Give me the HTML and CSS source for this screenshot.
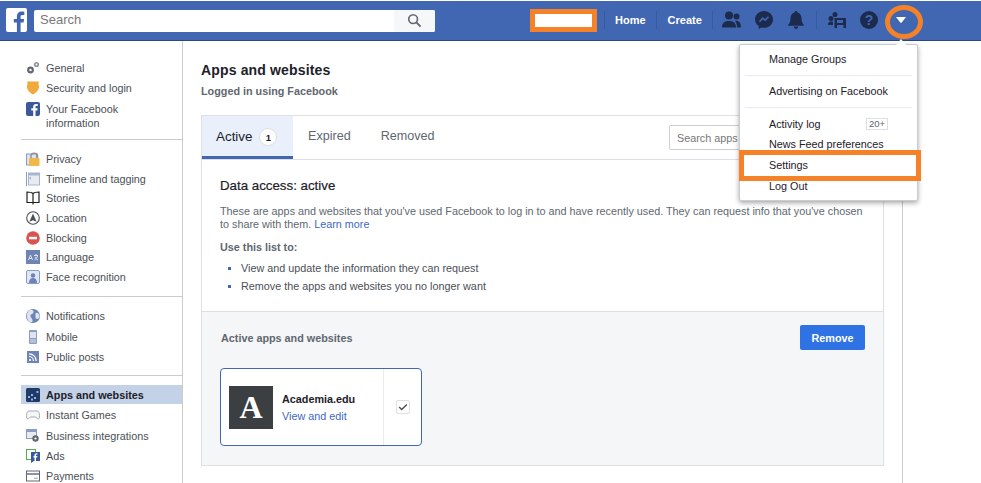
FILE: index.html
```html
<!DOCTYPE html>
<html lang="en">
<head>
  <meta charset="UTF-8" />
  <title>Apps and websites</title>
  <link rel="stylesheet" href="styles.css">
</head>
<body>
  <header class="topbar">
    <div class="logo"><svg viewBox="0 0 21 24" width="21" height="24"><path fill="#4267b2" d="M14.6 24v-9.500h3l.5-3.600h-3.500V8.700c0-1 .3-1.800 1.800-1.800h1.900V3.700c-.4 0-1.500-.2-2.800-.2-2.700 0-4.600 1.700-4.600 4.700v2.700H7.800v3.600h3.100V24z"/></svg></div>
    <div class="search">
      <span class="search-text">Search</span>
      <span class="search-btn"><svg viewBox="0 0 16 16" width="15" height="15"><circle cx="6.5" cy="6.5" r="4.7" fill="none" stroke="#606770" stroke-width="1.7"/><path d="M10 10l4.500 4.500" stroke="#606770" stroke-width="2"/></svg></span>
    </div>
    <div class="redacted"></div>
    <span class="sep"></span>
    <a class="nav-link">Home</a>
    <span class="sep"></span>
    <a class="nav-link">Create</a>
    <span class="sep"></span>
    <div class="nav-icons">
      <svg viewBox="0 0 19 17" width="19" height="17"><circle cx="7" cy="4.500" r="4" fill="#1c2b4d"/><circle cx="14.5" cy="5.500" r="3" fill="#1c2b4d"/><path fill="#1c2b4d" d="M0 16.500c0-4 2-6.500 7-6.500s7 2.500 7 6.500zM15 16.500c0-3-.6-5-2-6.500 3.500-1 6 1.500 6 6.500z"/></svg>
      <svg viewBox="0 0 18 18" width="18" height="18"><path fill="#1c2b4d" d="M9 0c5 0 9 3.700 9 8.400s-4 8.400-9 8.400c-.9 0-1.700-.1-2.500-.3L3.700 18v-3.200C1.400 13.300 0 11 0 8.400 0 3.700 4 0 9 0z"/><path fill="none" stroke="#4267b2" stroke-width="1.6" d="M4.500 10.800l3.200-3.600 2.500 2 3.300-3.500"/></svg>
      <svg viewBox="0 0 18 18" width="18" height="18"><path fill="#1c2b4d" d="M9 0c.9 0 1.500.6 1.500 1.400 2.800.7 4 3 4 6 0 3 .8 5 2.500 6.600v.8H1V14c1.700-1.600 2.500-3.600 2.500-6.600 0-3 1.200-5.300 4-6C7.500.6 8.100 0 9 0zM6.800 15.600h4.400C11 17 10.100 18 9 18s-2-1-2.200-2.400z"/></svg>
      <span class="sep sep-inline"></span>
      <svg viewBox="0 0 18 16" width="18" height="16"><circle cx="3" cy="6.500" r="2.500" fill="#1c2b4d"/><circle cx="7" cy="2.500" r="2.500" fill="#1c2b4d"/><path fill="#1c2b4d" d="M0 13c0-2 1-3.500 3-3.500 1.500 0 2 .5 2 1V13zM6.500 6H18v10h-2.500v-3h-6.500v3H6.500z"/><path fill="#4267b2" d="M9 8h6v3H9z"/></svg>
      <svg viewBox="0 0 18 18" width="18" height="18"><circle cx="9" cy="9" r="9" fill="#1c2b4d"/><text x="9" y="13.800" class="help-mark" text-anchor="middle">?</text></svg>
      <svg class="caret" viewBox="0 0 10 6" width="10" height="6"><path fill="#fff" d="M0 0h10L5.700 5.600a1 1 0 0 1-1.400 0z"/></svg>
    </div>
  </header>

  <div class="page">
    <nav class="sidebar">
      <ul class="side-group">
        <li><svg viewBox="0 0 14 14" width="14" height="14"><circle cx="4.5" cy="9" r="3.400" fill="#606770"/><circle cx="4.5" cy="9" r="1.200" fill="#fff"/><circle cx="10.5" cy="3.500" r="2.600" fill="#8d949e"/><circle cx="10.5" cy="3.500" r=".9" fill="#fff"/></svg>General</li>
        <li><svg viewBox="0 0 14 14" width="14" height="14"><path fill="#f2a93b" d="M1 .5h12c-.8 1.500-.5 3 0 4.500.5 3-2.200 6.700-6 8.500C3.200 11.700.5 8 1 5c.5-1.500.8-3 0-4.500z"/></svg>Security and login</li>
        <li class="two-line"><svg viewBox="0 0 14 14" width="14" height="14"><rect width="14" height="14" rx="2" fill="#3b5998"/><path fill="#fff" d="M9.500 14V8.500h1.800l.3-2.200H9.500V5c0-.6.200-1 1-1h1.200V2.100c-.3 0-1-.1-1.700-.1C8.300 2 7.200 3 7.200 4.800v1.500H5.300v2.200h1.900V14z"/></svg><span>Your Facebook<br>information</span></li>
      </ul>
      <ul class="side-group group-second">
        <li><svg viewBox="0 0 14 14" width="14" height="14"><rect x=".5" y="2" width="10" height="11" fill="#dfe3ee" stroke="#8b9dc3"/><rect x="3" y="6" width="10.500" height="8" rx="1" fill="#f0b849"/><path fill="none" stroke="#90949c" stroke-width="1.5" d="M5 6V3.500C5 .5 11.500 .5 11.500 3.500V6"/></svg>Privacy</li>
        <li><svg viewBox="0 0 14 14" width="14" height="14"><path fill="#8b9dc3" d="M0 0h1v14H0z"/><rect x="2.5" y="1" width="11" height="12" fill="#e9ebee" stroke="#a8b5cf"/><path fill="#a8b5cf" d="M3 1h10v2.500H3zM3 6l2-1.500V8z"/></svg>Timeline and tagging</li>
        <li><svg viewBox="0 0 14 14" width="14" height="14"><path fill="none" stroke="#1c1e21" stroke-width="1.2" d="M7 2.500C5.500 1 3 1 1 1v10.500h6c2.500 0 4 0 6 0V1c-2 0-4.500 0-6 1.500zM7 2.500V13.500"/></svg>Stories</li>
        <li><svg viewBox="0 0 14 14" width="14" height="14"><circle cx="7" cy="7" r="6.300" fill="#fff" stroke="#4b4f56" stroke-width="1.1"/><path fill="#4b4f56" d="M7 2.500l3.600 8.300L7 9.300l-3.600 1.500z"/></svg>Location</li>
        <li><svg viewBox="0 0 14 14" width="14" height="14"><circle cx="7" cy="7" r="6.800" fill="#d9534f"/><rect x="3" y="5.800" width="8" height="2.500" fill="#fff"/></svg>Blocking</li>
        <li><svg viewBox="0 0 14 14" width="14" height="14"><rect width="14" height="14" fill="#6d84b4"/><path fill="none" stroke="#dfe3ee" d="M2.500 10l2-5 2 5M3.200 8.500h2.600M8 5.500h4M10 4v2M8.500 10c1.500-1 2.500-2.500 3-4M9 7c.5 1.300 1.500 2.500 3 3"/></svg>Language</li>
        <li><svg viewBox="0 0 14 14" width="14" height="14"><rect x=".5" y=".5" width="13" height="13" rx="1.500" fill="#dfe6f5" stroke="#8b9dc3"/><circle cx="7" cy="5.500" r="2.200" fill="#6d84b4"/><path fill="#6d84b4" d="M3 13c0-3.500 1.500-5 4-5s4 1.500 4 5z"/></svg>Face recognition</li>
      </ul>
      <ul class="side-group group-third">
        <li><svg viewBox="0 0 14 14" width="14" height="14"><circle cx="7" cy="7" r="7" fill="#6d84b4"/><path fill="#dfe3ee" d="M5 .5c2 .5 3 1.500 2.500 3S5 5 4.500 6.500 6 9 6.500 11 5.500 13.500 4 13 1 10 .8 7 3 1 5 .5zM10 4c1.500-.5 3 .5 3.500 2.500S12.500 10 11 10 9.500 8 9.500 7 9 4.500 10 4z"/></svg>Notifications</li>
        <li><svg viewBox="0 0 14 14" width="14" height="14"><rect x="3" y="0" width="8" height="14" rx="1" fill="#8b9dc3"/><rect x="4" y="2" width="6" height="6" fill="#dfe3ee"/><path fill="#dfe3ee" d="M4 9.500h6v1H4zM4 11.500h6v1H4z"/></svg>Mobile</li>
        <li><svg viewBox="0 0 14 14" width="14" height="14"><rect x="1" y="1" width="12" height="12" fill="#6d84b4"/><circle cx="4" cy="10" r="1.100" fill="#fff"/><path fill="none" stroke="#fff" stroke-width="1.2" d="M3 6.500A4.500 4.500 0 0 1 7.500 11M3 3.800A7.200 7.200 0 0 1 10.200 11"/></svg>Public posts</li>
      </ul>
      <ul class="side-group group-last">
        <li class="selected"><svg viewBox="0 0 14 14" width="14" height="14"><rect width="14" height="14" rx="1.500" fill="#1f3a66"/><g fill="#8fb4e8"><rect x="2" y="8" width="2" height="2"/><rect x="5" y="6" width="2" height="2"/><rect x="8" y="9" width="2" height="2"/><rect x="10.5" y="3" width="2" height="2"/><rect x="5" y="10.500" width="2" height="2"/></g></svg>Apps and websites</li>
        <li><svg viewBox="0 0 14 14" width="14" height="14"><path fill="#f5f6f7" stroke="#a5a9b1" d="M3 3h8c1.500 0 2.500 1.500 2.500 4.500 0 2-.3 3.500-1.300 3.500S10.500 9 9.500 9h-5C3.500 9 2.800 11 1.800 11S.5 9.500.5 7.500C.5 4.500 1.500 3 3 3z"/></svg>Instant Games</li>
        <li><svg viewBox="0 0 14 14" width="14" height="14"><rect x=".5" y=".5" width="10" height="9" fill="#e9ebee" stroke="#8b9dc3"/><path fill="#8b9dc3" d="M1 1h9v2H1z"/><circle cx="9.5" cy="9.500" r="3.200" fill="#606770"/><circle cx="9.5" cy="9.500" r="1.100" fill="#fff"/></svg>Business integrations</li>
        <li><svg viewBox="0 0 14 14" width="14" height="14"><rect x=".5" y=".5" width="9" height="10" fill="#fff" stroke="#57a957"/><rect x="5" y="3" width="9" height="9" fill="#3b5998"/><path fill="#3b5998" d="M5 12h3l-3 2z"/><path fill="#fff" d="M10 12V8.500h1.200l.2-1.500H10V6.200c0-.4.100-.7.700-.7h.8V4.200h-1.100C9.300 4.200 8.500 4.900 8.500 6v1H7.500v1.500h1V12z"/></svg>Ads</li>
        <li><svg viewBox="0 0 14 14" width="14" height="14"><rect x=".5" y="2" width="13" height="10" fill="#fff" stroke="#606770"/><path fill="#8d949e" d="M1 4h12v2H1z"/><path fill="#bec3c9" d="M8 8.500h4v1.500H8z"/></svg>Payments</li>
      </ul>
    </nav>

    <main class="content">
      <h1 class="title">Apps and websites</h1>
      <p class="subtitle">Logged in using Facebook</p>

      <section class="panel">
        <div class="tabs">
          <a class="tab tab-active">Active <span class="badge">1</span></a>
          <a class="tab">Expired</a>
          <a class="tab">Removed</a>
          <div class="apps-search">Search apps</div>
        </div>

        <div class="info">
          <h2 class="info-title">Data access: active</h2>
          <p class="info-text">These are apps and websites that you've used Facebook to log in to and have recently used. They can request info that you've chosen to share with them. <a class="link">Learn more</a></p>
          <p class="info-lead">Use this list to:</p>
          <ul class="info-list">
            <li>View and update the information they can request</li>
            <li>Remove the apps and websites you no longer want</li>
          </ul>
        </div>

        <div class="active-apps">
          <div class="active-head">
            <span class="active-title">Active apps and websites</span>
            <button class="remove-btn">Remove</button>
          </div>
          <div class="app-card">
            <div class="app-main">
              <div class="app-logo">A</div>
              <div class="app-text">
                <div class="app-name">Academia.edu</div>
                <a class="link">View and edit</a>
              </div>
            </div>
            <div class="app-check">
              <span class="checkbox"><svg viewBox="0 0 14 14" width="14" height="14"><path fill="none" stroke="#4b4f56" stroke-width="1.6" d="M2.500 7l3 3 6-6"/></svg></span>
            </div>
          </div>
        </div>
      </section>
    </main>
  </div>

  <div class="menu">
    <span class="menu-notch"></span>
    <div class="menu-item">Manage Groups</div>
    <hr class="menu-sep">
    <div class="menu-item">Advertising on Facebook</div>
    <hr class="menu-sep">
    <div class="menu-item menu-log">Activity log <span class="count">20+</span></div>
    <div class="menu-item">News Feed preferences</div>
    <div class="menu-item menu-gap">Settings</div>
    <div class="menu-item menu-gap">Log Out</div>
  </div>
  <div class="mark-settings"></div>
  <div class="mark-caret"></div>
</body>
</html>
```

FILE: styles.css
```css
html, body {
  margin: 0;
  height: 483px;
  overflow: hidden;
  background: #fff;
  font-family: "Liberation Sans", Arial, sans-serif;
  font-size: 10.8px;
  color: #1d2129;
}
ul {
  list-style: none;
  margin: 0;
  padding: 0;
}

/* top bar */
.topbar {
  display: flex;
  align-items: center;
  height: 39px;
  margin-top: 1px;
  padding-left: 6px;
  background: #4267b2;
  border-bottom: 1px solid #29487d;
}
.logo {
  width: 21px;
  height: 24px;
  background: #fff;
  border-radius: 2px;
  margin: -2px 7px 0 0;
}
.search {
  display: flex;
  align-items: center;
  justify-content: space-between;
  width: 401px;
  height: 22px;
  background: #fff;
  border-radius: 2px;
  margin-right: 95px;
}
.search-text {
  padding: 0 0 3px 6px;
  font-size: 13px;
  color: #777;
}
.search-btn {
  display: flex;
  align-items: center;
  justify-content: center;
  width: 41px;
  height: 22px;
  background: #f6f7f9;
  border-radius: 0 2px 2px 0;
}
.redacted {
  width: 57px;
  height: 13px;
  background: #fff;
  border: 5px solid #f58229;
  margin-right: 7px;
}
.sep {
  width: 1px;
  height: 18px;
  margin-bottom: 2px;
  background: #3a5a9e;
}
.nav-link {
  margin: 0 10px 2px;
  font-size: 11px;
  font-weight: bold;
  color: #fff;
}
.sep + .nav-link + .sep + .nav-link {
  margin-left: 11px;
}
.nav-icons {
  display: flex;
  align-items: center;
  gap: 14px;
  margin: 0 0 2px 9px;
}
.sep-inline {
  margin: 0 -3px;
}
.help-mark {
  font-size: 14px;
  font-weight: bold;
  fill: #4267b2;
}
.caret {
  margin: 1px 0 0 4px;
}

/* page layout */
.page {
  display: flex;
  height: 442px;
}
.sidebar {
  box-sizing: border-box;
  width: 183px;
  padding: 17px 0 0 21px;
  border-right: 1px solid #ccc;
}
.side-group {
  border-bottom: 1px solid #ccc;
  padding-bottom: 6px;
  margin-bottom: 9px;
}
.side-group li {
  display: flex;
  align-items: center;
  gap: 6px;
  height: 20px;
  padding-left: 5px;
  color: #4b4f56;
  white-space: nowrap;
}
.side-group svg {
  flex: none;
}
.side-group .two-line {
  box-sizing: border-box;
  align-items: flex-start;
  height: 35px;
  padding-top: 4px;
  line-height: 14px;
}
.group-second {
  padding-bottom: 9px;
}
.group-second li {
  height: 19.7px;
}
.group-third {
  padding-bottom: 8px;
}
.group-third li {
  height: 20.5px;
}
.group-last {
  border-bottom: none;
}
.group-last li {
  height: 20.3px;
}
.side-group .selected {
  height: 19px;
  margin-bottom: 1px;
  background: #c4d2e7;
  font-weight: bold;
  color: #1d2129;
}

/* main column */
.content {
  box-sizing: border-box;
  width: 720px;
  padding: 21px 18px 0;
  border-right: 1px solid #ccc;
}
.title {
  margin: 0;
  font-size: 14px;
  line-height: 16px;
  font-weight: bold;
  letter-spacing: 0.15px;
}
.subtitle {
  margin: 6px 0 0;
  line-height: 14px;
  font-weight: bold;
  color: #606770;
}
.panel {
  margin-top: 17px;
  border: 1px solid #dddfe2;
}
.tabs {
  position: relative;
  display: flex;
  height: 43px;
  border-bottom: 1px solid #dddfe2;
}
.tab {
  display: flex;
  align-items: center;
  padding: 0 14px 3px;
  font-size: 12.6px;
  color: #606770;
  margin-right: 2px;
}
.tab-active {
  box-sizing: border-box;
  width: 91px;
  gap: 7px;
  padding-bottom: 0;
  margin-right: 1px;
  background: #e9effb;
  border-bottom: 3px solid #4267b2;
  color: #1d2129;
  font-size: 13.4px;
}
.badge {
  display: flex;
  align-items: center;
  justify-content: center;
  width: 16px;
  height: 16px;
  margin-top: 2px;
  background: #fff;
  border: 1px solid #dddfe2;
  border-radius: 50%;
  font-size: 9.5px;
  font-weight: bold;
}
.apps-search {
  box-sizing: border-box;
  position: absolute;
  top: 9px;
  left: 467px;
  width: 200px;
  height: 25px;
  padding: 6px 7px;
  background: #fff;
  border: 1px solid #ccd0d5;
  border-radius: 2px;
  color: #777;
}
.info {
  box-sizing: border-box;
  height: 151px;
  padding: 18px 18px 0;
}
.info-title {
  margin: 0;
  font-size: 13.3px;
  line-height: 16px;
  font-weight: normal;
  -webkit-text-stroke: 0.2px #1d2129;
}
.info-text {
  margin: 11px 0 0;
  line-height: 13px;
  color: #606770;
}
.link {
  color: #4267c4;
}
.info-lead {
  margin: 9px 0 0;
  line-height: 14px;
  font-weight: bold;
  color: #606770;
}
.info-list {
  margin-top: 7px;
  color: #4b4f56;
}
.info-list li {
  position: relative;
  height: 18px;
  line-height: 14px;
  padding-left: 21px;
}
.info-list li::before {
  content: "";
  position: absolute;
  left: 8px;
  top: 6px;
  width: 3px;
  height: 3px;
  background: #4267b2;
}
.active-apps {
  box-sizing: border-box;
  height: 154px;
  padding: 13px 18px 0;
  background: #f5f6f7;
  border-top: 1px solid #dddfe2;
}
.active-head {
  display: flex;
  align-items: center;
  justify-content: space-between;
  height: 25px;
}
.active-title {
  margin-left: 1px;
  font-weight: bold;
  color: #606770;
}
.remove-btn {
  width: 65px;
  height: 25px;
  padding: 0;
  background: #2f72e4;
  border: none;
  border-radius: 2px;
  color: #fff;
  font-family: "Liberation Sans", Arial, sans-serif;
  font-size: 10.8px;
  font-weight: bold;
}
.app-card {
  box-sizing: border-box;
  display: flex;
  width: 202px;
  height: 78px;
  margin-top: 18px;
  background: #fff;
  border: 1px solid #4267b2;
  border-radius: 4px;
}
.app-main {
  box-sizing: border-box;
  display: flex;
  align-items: center;
  gap: 9px;
  width: 163px;
  padding-left: 8px;
  border-right: 1px solid #e9ebee;
}
.app-logo {
  display: flex;
  align-items: center;
  justify-content: center;
  width: 44px;
  height: 43px;
  background: #3c3f41;
  color: #fff;
  font-family: "Liberation Serif", serif;
  font-size: 32px;
  font-weight: bold;
}
.app-name {
  font-weight: bold;
  margin-bottom: 5px;
}
.app-check {
  flex: 1;
  display: flex;
  align-items: center;
  justify-content: center;
}
.checkbox {
  display: flex;
  align-items: center;
  justify-content: center;
  width: 12px;
  height: 12px;
  border: 1px solid #dddfe2;
  border-radius: 2px;
}

/* dropdown and the orange markup drawn over the page */
.menu {
  box-sizing: border-box;
  position: absolute;
  left: 739px;
  top: 44px;
  width: 179px;
  height: 157px;
  padding-top: 4px;
  background: #fff;
  border: 1px solid #c9cdd2;
  border-radius: 2px;
  box-shadow: 0 2px 5px rgba(0, 0, 0, 0.35);
}
.menu-notch {
  position: absolute;
  top: -6px;
  left: 156px;
  border-left: 5px solid transparent;
  border-right: 5px solid transparent;
  border-bottom: 6px solid #fff;
}
.menu-item {
  height: 20px;
  line-height: 20px;
  padding-left: 29px;
  color: #1d2129;
}
.menu-log {
  display: flex;
  align-items: center;
  justify-content: space-between;
  padding-right: 29px;
  margin-top: 6px;
}
.menu-gap {
  margin-top: 1px;
}
.count {
  box-sizing: border-box;
  height: 12px;
  line-height: 10px;
  padding: 0 2px;
  border: 1px solid #dddfe2;
  font-size: 9.5px;
  color: #606770;
}
.menu-sep {
  height: 1px;
  margin: 6px 5px 5px;
  background: #e9ebee;
  border: none;
}
.mark-settings {
  box-sizing: border-box;
  position: absolute;
  left: 739px;
  top: 150px;
  width: 182px;
  height: 31px;
  border: 5px solid #f58229;
}
.mark-caret {
  box-sizing: border-box;
  position: absolute;
  left: 885px;
  top: 5px;
  width: 38px;
  height: 34px;
  border: 5px solid #f58229;
  border-radius: 50%;
}
```
